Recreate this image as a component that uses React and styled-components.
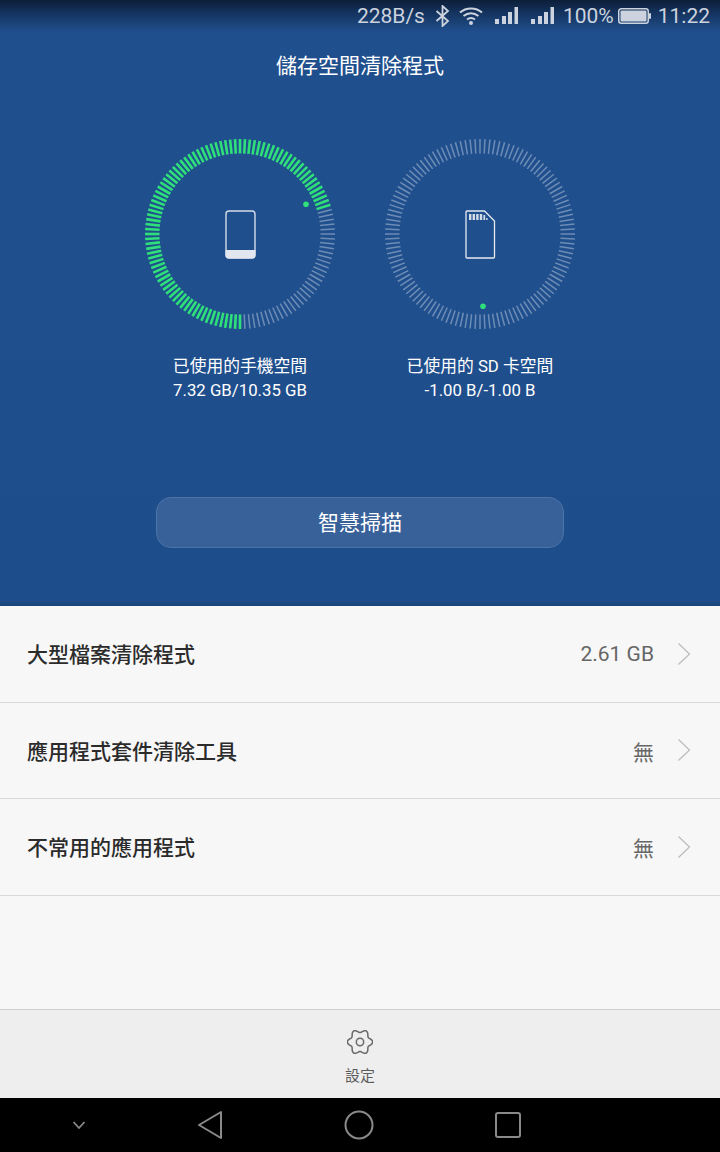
import React from "react";
import styled, { createGlobalStyle } from "styled-components";

const GlobalStyle = createGlobalStyle`
html, body {
  margin: 0;
  padding: 0;
  background: #f7f7f7;
  font-family: Roboto, "Noto Sans CJK TC", sans-serif;
}
* { box-sizing: border-box; }
`;

const Screen = styled.div`
  width: 720px;
  height: 1152px;
  display: flex;
  flex-direction: column;
  overflow: hidden;
`;

const Hero = styled.div`
  height: 606px;
  flex-shrink: 0;
  display: flex;
  flex-direction: column;
  background: linear-gradient(to bottom, #0c1e38 0, #14325c 12px, #204f8d 32px, #204f8d 300px, #1d4d8b 600px, #1a4478 606px);
`;

const StatusBar = styled.div`
  height: 32px;
  display: flex;
  align-items: center;
  justify-content: flex-end;
  padding-right: 10px;
  color: #ccd3de;
  font-size: 21px;
  line-height: 32px;
`;

const StatusText = styled.span`
  margin-left: ${(props) => props.$left || 0}px;
`;

const StatusIcon = styled.svg`
  display: block;
  flex-shrink: 0;
  margin-left: ${(props) => props.$left || 0}px;
`;

const Title = styled.div`
  margin-top: 17px;
  text-align: center;
  color: #fff;
  font-size: 21px;
  line-height: 34px;
`;

const Gauges = styled.div`
  margin-top: 51px;
  display: flex;
  justify-content: center;
`;

const Gauge = styled.div`
  width: 240px;
  display: flex;
  flex-direction: column;
  align-items: center;
`;

const RingWrap = styled.svg`
  display: block;
  width: 200px;
  height: 200px;
`;

const GaugeLabel = styled.div`
  margin-top: 21px;
  color: #fff;
  font-size: 16.8px;
  line-height: 23.5px;
  text-align: center;
  white-space: nowrap;
`;

const ScanButton = styled.div`
  align-self: center;
  margin-top: 95px;
  width: 408px;
  height: 51px;
  padding-bottom: 3px;
  border-radius: 15px;
  background: #38619a;
  border: 1px solid #4d72a6;
  color: #fff;
  font-size: 21px;
  display: flex;
  align-items: center;
  justify-content: center;
`;

const List = styled.div`
  flex: 1;
  background: #f7f7f7;
`;

const Row = styled.div`
  height: 96.6px;
  display: flex;
  align-items: center;
  padding: 0 29px 0 27px;
  border-bottom: 1px solid #d9d9d9;
`;

const RowLabel = styled.div`
  flex: 1;
  color: #2b2b2b;
  font-size: 21px;
  font-weight: 500;
  margin-top: -1px;
`;

const RowValue = styled.div`
  color: #666;
  font-size: 21px;
  margin-right: 23px;
  margin-top: 1px;
`;

const Footer = styled.div`
  height: 89px;
  flex-shrink: 0;
  background: #eeeeee;
  border-top: 1px solid #d0d0d0;
  display: flex;
  flex-direction: column;
  align-items: center;
  padding-top: 19px;
  color: #5c5c5c;
`;

const FooterText = styled.div`
  margin-top: 11px;
  font-size: 15px;
  line-height: 20px;
`;

const NavBar = styled.div`
  height: 54px;
  flex-shrink: 0;
  background: #000;
  display: flex;
  align-items: center;
  padding-left: 72px;
`;

const NavIcon = styled.svg`
  display: block;
  flex-shrink: 0;
  margin-left: ${(props) => props.$left || 0}px;
`;

const TICKS = 120;

const Ring = ({ percent, dot, children }) => {
  const ticks = [];
  for (let i = 0; i < TICKS; i++) {
    // fill runs clockwise starting from the bottom of the ring
    const deg = (i * 360) / TICKS;
    const rad = ((deg + 180) * Math.PI) / 180;
    const on = i / TICKS <= percent;
    const x1 = 100 + Math.sin(rad) * 80.5;
    const y1 = 100 - Math.cos(rad) * 80.5;
    const x2 = 100 + Math.sin(rad) * 95;
    const y2 = 100 - Math.cos(rad) * 95;
    ticks.push(
      <line
        key={i}
        x1={x1}
        y1={y1}
        x2={x2}
        y2={y2}
        stroke={on ? "#2fe07a" : "#8ea6c8"}
        strokeWidth={on ? 2.6 : 1.5}
        strokeOpacity={on ? 1 : 0.7}
      />
    );
  }
  return (
    <RingWrap viewBox="0 0 200 200">
      {ticks}
      <circle cx={dot[0]} cy={dot[1]} r="2.8" fill="#2fe07a" />
      {children}
    </RingWrap>
  );
};

const Bluetooth = () => (
  <StatusIcon $left={10} width="15" height="22" viewBox="0 0 15 22" fill="none" stroke="#ccd3de" strokeWidth="1.8">
    <path d="M1.5 6 L13 16 L7.5 21 V1 L13 6 L1.5 16" />
  </StatusIcon>
);

const Wifi = () => (
  <StatusIcon $left={9} width="24" height="20" viewBox="0 0 24 20" fill="none" stroke="#ccd3de" strokeWidth="2">
    <path d="M1 6.5 C7 1 17 1 23 6.5" />
    <path d="M4.5 10 C9 6.3 15 6.3 19.5 10" />
    <path d="M8 13.5 C10.5 11.6 13.5 11.6 16 13.5" />
    <circle cx="12" cy="17" r="2" fill="#ccd3de" stroke="none" />
  </StatusIcon>
);

const Signal = ({ left }) => (
  <StatusIcon $left={left} width="23" height="20" viewBox="0 0 23 20" fill="#ccd3de">
    <rect x="0" y="13" width="4" height="5" />
    <rect x="7" y="10" width="4" height="8" />
    <rect x="13" y="6" width="4" height="12" />
    <rect x="19.5" y="1" width="3.5" height="17" />
  </StatusIcon>
);

const Battery = () => (
  <StatusIcon $left={4} width="33" height="18" viewBox="0 0 33 18">
    <rect x="0.75" y="1.75" width="29.5" height="14.5" rx="2.5" fill="none" stroke="#ccd3de" strokeWidth="1.5" />
    <rect x="2.5" y="3.5" width="26" height="11" rx="1" fill="#ccd3de" />
    <rect x="31" y="6" width="2" height="6" rx="1" fill="#ccd3de" />
  </StatusIcon>
);

const Chevron = () => (
  <svg width="14" height="24" viewBox="0 0 14 24" fill="none" stroke="#bbb" strokeWidth="1.2" style={{ display: "block" }}>
    <path d="M1.5 1.5 L12.5 12 L1.5 22.5" />
  </svg>
);

// petal outline of the settings gear, points left and right
const gearPath = () => {
  let d = "";
  for (let i = 0; i <= 120; i++) {
    const t = (i / 120) * Math.PI * 2;
    const r = 10.2 - 1.5 * Math.cos(6 * t);
    const x = 12 + r * Math.sin(t);
    const y = 12 - r * Math.cos(t);
    d += (i === 0 ? "M" : "L") + x.toFixed(2) + " " + y.toFixed(2) + " ";
  }
  return d + "Z";
};

const Gear = () => (
  <svg width="26" height="26" viewBox="0 0 24 24" fill="none" stroke="#6a6a6a" strokeWidth="1.4" style={{ display: "block" }}>
    <path d={gearPath()} />
    <circle cx="12" cy="12" r="3.4" />
  </svg>
);

const rows = [
  { label: "大型檔案清除程式", value: "2.61 GB" },
  { label: "應用程式套件清除工具", value: "無" },
  { label: "不常用的應用程式", value: "無" },
];

const App = () => {
  return (
    <Screen>
      <GlobalStyle />
      <Hero>
        <StatusBar>
          <StatusText>228B/s</StatusText>
          <Bluetooth />
          <Wifi />
          <Signal left={12} />
          <Signal left={13} />
          <StatusText $left={9}>100%</StatusText>
          <Battery />
          <StatusText $left={7}>11:22</StatusText>
        </StatusBar>
        <Title>儲存空間清除程式</Title>
        <Gauges>
          <Gauge>
            <Ring percent={0.707} dot={[166, 70.3]}>
              <rect x="86" y="77" width="29" height="47" rx="3" fill="none" stroke="#d5dce8" strokeWidth="1.4" />
              <path d="M85.5 116 H115.5 V121 a3.5 3.5 0 0 1 -3.5 3.5 H89 a3.5 3.5 0 0 1 -3.5 -3.5 Z" fill="#e2e6ee" />
            </Ring>
            <GaugeLabel>
              已使用的手機空間
              <br />
              7.32 GB/10.35 GB
            </GaugeLabel>
          </Gauge>
          <Gauge>
            <Ring percent={-1} dot={[103, 172.3]}>
              <path d="M87 77 H104.5 L114.5 87 V123 a1 1 0 0 1 -1 1 H87 a1 1 0 0 1 -1 -1 V78 a1 1 0 0 1 1 -1 Z" fill="none" stroke="#e6eaf1" strokeWidth="1.3" />
              <path d="M89 80 h2.4 v6 h-2.4 Z M92.6 80 h2.4 v6 h-2.4 Z M96.2 80 h2.4 v6 h-2.4 Z M99.8 80 h2.4 v6 h-2.4 Z M103.4 81 h1.8 v5 h-1.8 Z M106.2 84 h1.4 v2 h-1.4 Z" fill="#d5dce8" />
            </Ring>
            <GaugeLabel>
              已使用的 SD 卡空間
              <br />
              -1.00 B/-1.00 B
            </GaugeLabel>
          </Gauge>
        </Gauges>
        <ScanButton>智慧掃描</ScanButton>
      </Hero>
      <List>
        {rows.map((row) => (
          <Row key={row.label}>
            <RowLabel>{row.label}</RowLabel>
            <RowValue>{row.value}</RowValue>
            <Chevron />
          </Row>
        ))}
      </List>
      <Footer>
        <Gear />
        <FooterText>設定</FooterText>
      </Footer>
      <NavBar>
        <NavIcon width="14" height="10" viewBox="0 0 14 10" fill="none" stroke="#8a8a8a" strokeWidth="1.8">
          <path d="M1.5 2 L7 8 L12.5 2" />
        </NavIcon>
        <NavIcon $left={111} width="26" height="30" viewBox="0 0 26 30" fill="none" stroke="#8a8a8a" strokeWidth="2" strokeLinejoin="round">
          <path d="M24 2 V28 L2 15 Z" />
        </NavIcon>
        <NavIcon $left={121} width="30" height="30" viewBox="0 0 30 30" fill="none" stroke="#8a8a8a" strokeWidth="2">
          <circle cx="15" cy="15" r="13.5" />
        </NavIcon>
        <NavIcon $left={120} width="28" height="28" viewBox="0 0 28 28" fill="none" stroke="#8a8a8a" strokeWidth="2">
          <rect x="2" y="2" width="24" height="24" rx="2" />
        </NavIcon>
      </NavBar>
    </Screen>
  );
};

export default App;
